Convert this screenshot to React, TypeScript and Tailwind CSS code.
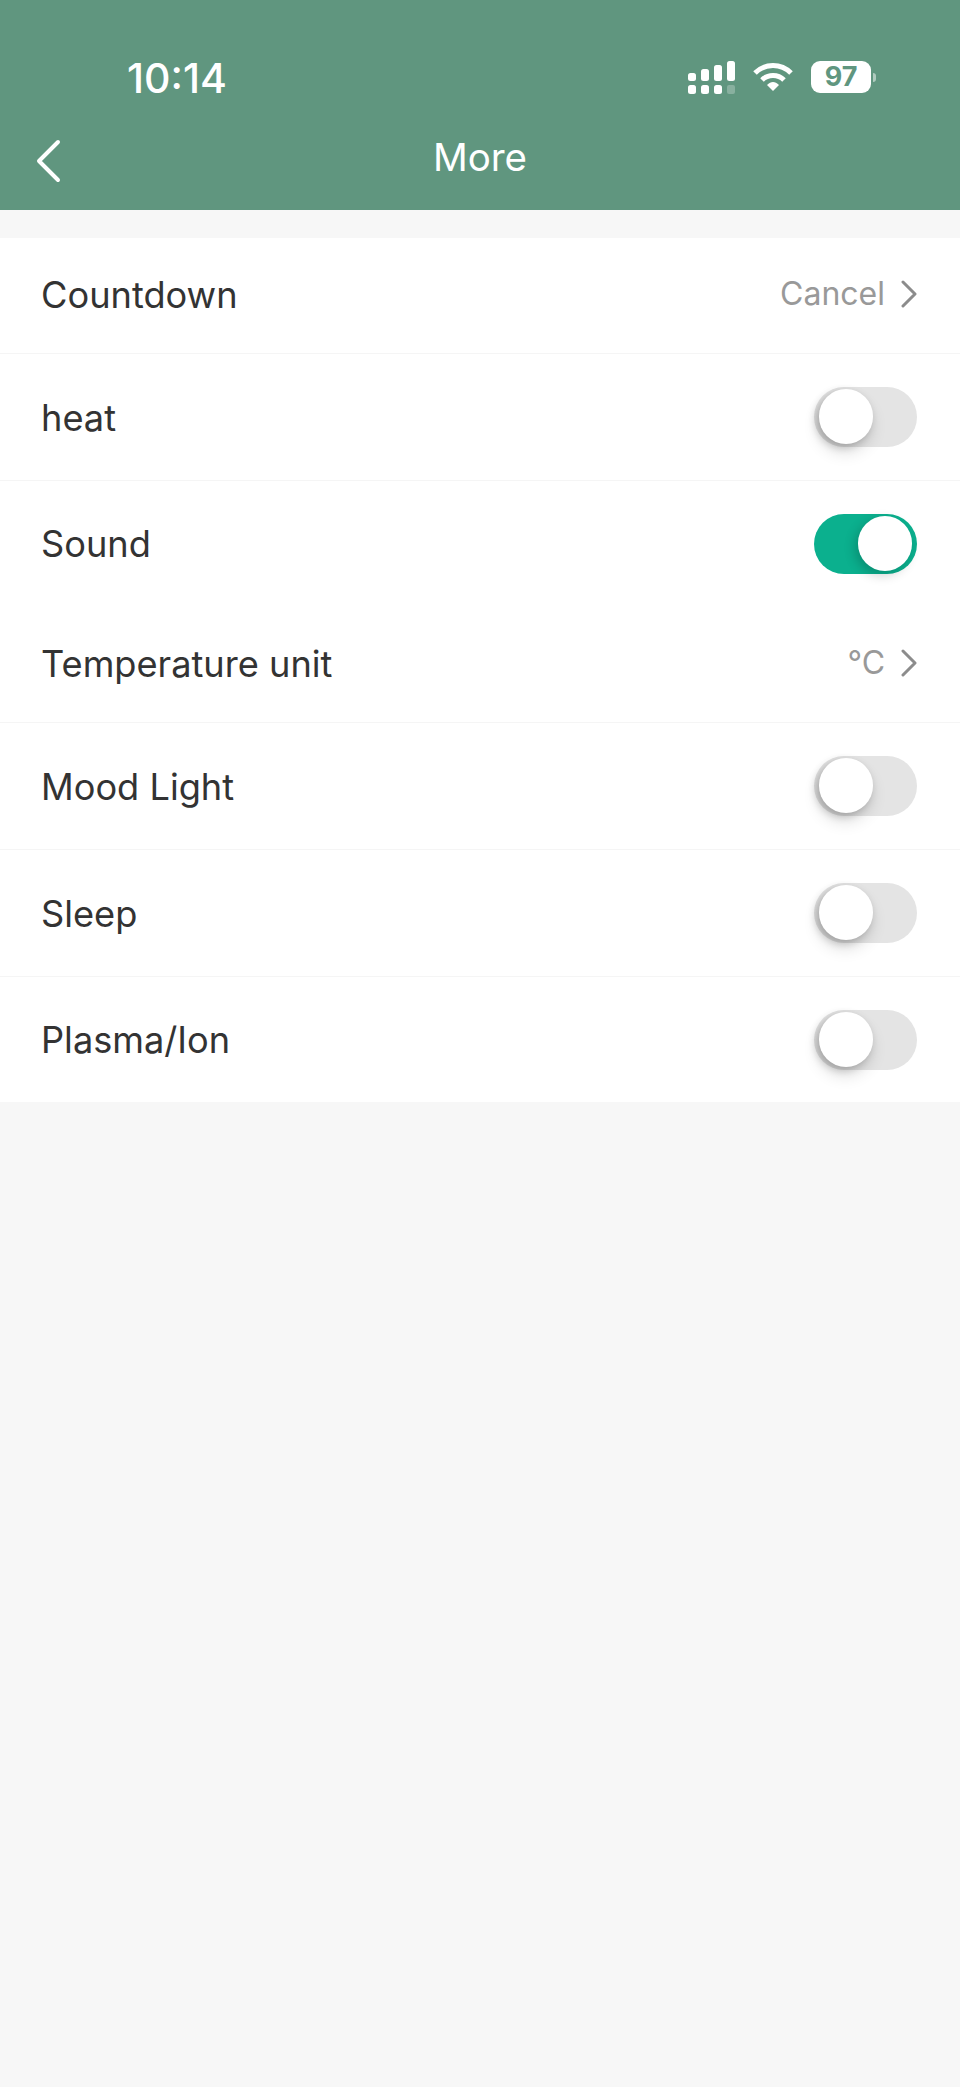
function Toggle({ on = false }: { on?: boolean }) {
  return (
    <div
      className={`relative h-[60px] w-[103px] rounded-full ${on ? 'bg-[#0bb08e]' : 'bg-[#e4e4e4]'}`}
    >
      <div
        className={`absolute top-[2px] h-[55px] w-[54px] rounded-full bg-white ${
          on
            ? 'right-[5px] shadow-[-3px_4px_12px_rgba(0,0,0,0.2)]'
            : 'left-[5px] shadow-[-3px_3px_8px_rgba(0,0,0,0.22),-1px_9px_16px_rgba(0,0,0,0.12)]'
        }`}
      />
    </div>
  );
}

function Row({
  label,
  value,
  toggle,
  on,
  className,
}: {
  label: string;
  value?: string;
  toggle?: boolean;
  on?: boolean;
  className: string;
}) {
  return (
    <div className={`flex items-center justify-between pl-[41px] pr-[43px] ${className}`}>
      <span className="pt-[2px] text-[36.2px] text-[#333333]">{label}</span>
      {toggle ? (
        <Toggle on={on} />
      ) : (
        <div className="flex items-center gap-[16px]">
          <span className="text-[32px] text-[#999999]">{value}</span>
          <svg
            width="16"
            height="28"
            viewBox="0 0 16 28"
            fill="none"
            stroke="#8c8c8c"
            strokeWidth="3"
            strokeLinecap="round"
            strokeLinejoin="round"
          >
            <path d="M2 2 L14 14 L2 26" />
          </svg>
        </div>
      )}
    </div>
  );
}

export default function App() {
  return (
    <div className="min-h-[2087px] bg-[#f7f7f7] font-['Inter',sans-serif]">
      <div className="h-[210px] bg-[#60967f] text-white">
        <div className="flex h-[125px] items-start justify-between pl-[127px] pr-[84px] pt-[53px]">
          <span className="text-[41px] leading-[50px] font-medium">10:14</span>
          <div className="flex h-[48px] items-center gap-[18px]">
            <svg width="47" height="33" viewBox="0 0 47 33" fill="white">
              <rect x="0" y="12" width="8" height="8" rx="2.5" />
              <rect x="13" y="8" width="8" height="12" rx="2.5" />
              <rect x="26" y="4" width="8" height="16" rx="2.5" />
              <rect x="39" y="0" width="8" height="20" rx="2.5" />
              <rect x="0" y="24" width="8" height="9" rx="2.5" />
              <rect x="13" y="24" width="8" height="9" rx="2.5" />
              <rect x="26" y="24" width="8" height="9" rx="2.5" />
              <rect x="39" y="24" width="8" height="9" rx="2" opacity="0.25" />
            </svg>
            <svg width="40" height="30" viewBox="0 0 40 30" fill="none" stroke="white" strokeWidth="5">
              <path d="M2 11 C12 1 28 1 38 11" />
              <path d="M9 18 C15 12 25 12 31 18" />
              <path d="M14 23 L20 29 L26 23 C22 19 18 19 14 23 Z" fill="white" stroke="none" />
            </svg>
            <div className="flex items-center gap-[2px]">
              <div className="flex h-[32px] w-[60px] items-center justify-center rounded-[9px] bg-white text-[27px] font-bold text-[#60967f]">
                97
              </div>
              <div className="h-[9px] w-[3px] rounded-r-full bg-white/50" />
            </div>
          </div>
        </div>
        <div className="relative flex h-[63px] items-center justify-center">
          <svg
            className="absolute left-[36px] top-[14px]"
            width="26"
            height="44"
            viewBox="0 0 26 44"
            fill="none"
            stroke="white"
            strokeWidth="4"
            strokeLinecap="round"
            strokeLinejoin="round"
          >
            <path d="M22 3 L3 22 L22 41" />
          </svg>
          <span className="pt-[2px] text-[38.5px]">More</span>
        </div>
      </div>
      <div className="mt-[28px] bg-white">
        <Row label="Countdown" value="Cancel" className="h-[116px] border-b border-[#f5f5f5] pb-[3px]" />
        <Row label="heat" toggle className="h-[127px] border-b border-[#f5f5f5]" />
        <Row label="Sound" toggle on className="h-[125px]" />
        <Row label="Temperature unit" value="°C" className="h-[117px] border-b border-[#f5f5f5] pb-[2px]" />
        <Row label="Mood Light" toggle className="h-[127px] border-b border-[#f5f5f5]" />
        <Row label="Sleep" toggle className="h-[127px] border-b border-[#f5f5f5]" />
        <Row label="Plasma/Ion" toggle className="h-[125px]" />
      </div>
    </div>
  );
}
